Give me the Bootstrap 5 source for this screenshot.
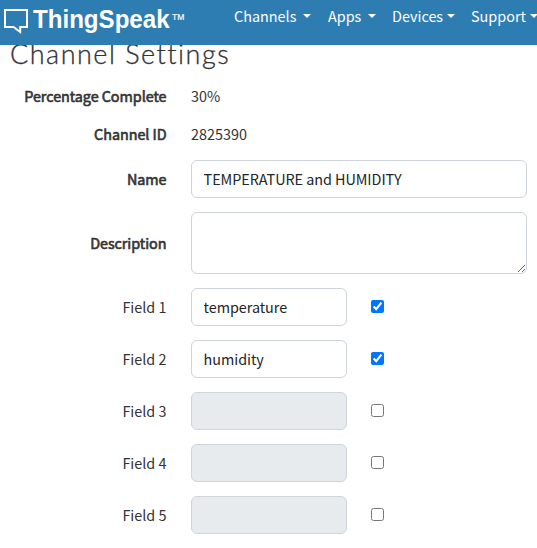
<!DOCTYPE html>
<html lang="en">
<head>
<meta charset="utf-8">
<meta name="viewport" content="width=device-width, initial-scale=1">
<title>Channel Settings - ThingSpeak</title>
<link href="https://cdn.jsdelivr.net/npm/bootstrap@5.3.0/dist/css/bootstrap.min.css" rel="stylesheet">
<style>
body{font-family:"Noto Sans CJK SC",sans-serif;font-size:14.4px;line-height:24px;color:#333;overflow:hidden}
.topbar{height:45px;background:#2e7db2;padding-left:3px}
.brand-text{font:bold 25.5px/36px "Liberation Sans",sans-serif;margin:1px -8px 0 5px;transform:scaleX(.945);transform-origin:left}
.brand-tm{font:9.5px/12px "Liberation Sans",sans-serif;margin:11px 0 0 2px;transform:scaleX(.9);transform-origin:left;-webkit-text-stroke:.2px #fff}
.main-menu{padding-top:4px;margin-right:-14px}
.main-menu .nav-link{padding:0;line-height:24px;color:#fff}
.item-channels{width:94px}.item-apps{width:64px}.item-devices{width:79px}.item-support{width:80px}
.item-channels .dropdown-toggle::after,.item-apps .dropdown-toggle::after{margin-left:7px}
.item-devices .dropdown-toggle::after,.item-support .dropdown-toggle::after{margin-left:4px}
.page-title{font:300 27px/32px Lato,sans-serif;letter-spacing:1.5px;height:33px;margin:-7px 0 0 10px;color:#333;-webkit-text-stroke:.3px #333}
.settings{padding:6px 10px 0 0}
.field-label{width:166.5px;text-align:right;margin-right:24.5px;flex:none}
.field-strong{-webkit-text-stroke:.6px #333;letter-spacing:-.06px}
.settings .form-control{font-size:14.4px;line-height:24px;height:38px;padding:5px 12px 7px 11.6px;border-color:#ced4da;border-radius:6px;color:#212529;letter-spacing:-.05px}
.settings .form-control:disabled{background:#e7ebee}
.settings textarea.form-control{height:62px;min-height:62px}
.settings .field-input{width:156px}
.text-row{height:38px}
.form-row{margin-bottom:14px}
.name-row{margin-top:7px}
.field-check{width:13px;height:13px;margin:0 0 2px 24px}
</style>
<script src="https://cdn.jsdelivr.net/npm/bootstrap@5.3.0/dist/js/bootstrap.bundle.min.js"></script>
</head>
<body>
<nav class="topbar d-flex align-items-start position-relative overflow-hidden">
  <a class="d-flex text-white text-decoration-none flex-shrink-0 brand-link" href="#">
    <svg width="25" height="36" viewBox="0 0 25 36" fill="none" stroke="#fff" stroke-width="2"><path d="M2 10H24V27H17.2V32L10.5 27H2Z"/></svg>
    <span class="brand-text">ThingSpeak</span><span class="brand-tm">TM</span>
  </a>
  <ul class="main-menu nav flex-nowrap ms-auto flex-shrink-0">
    <li class="item-channels"><a class="nav-link dropdown-toggle" href="#">Channels</a></li>
    <li class="item-apps"><a class="nav-link dropdown-toggle" href="#">Apps</a></li>
    <li class="item-devices"><a class="nav-link dropdown-toggle" href="#">Devices</a></li>
    <li class="item-support"><a class="nav-link dropdown-toggle" href="#">Support</a></li>
  </ul>
</nav>
<main>
  <h1 class="page-title">Channel Settings</h1>
  <form class="settings">
    <div class="d-flex align-items-center text-row"><span class="field-label field-strong">Percentage Complete</span><span>30%</span></div>
    <div class="d-flex align-items-center text-row"><span class="field-label field-strong">Channel ID</span><span>2825390</span></div>
    <div class="d-flex align-items-center form-row name-row"><label class="field-label field-strong" for="name">Name</label><input class="form-control" id="name" value="TEMPERATURE and HUMIDITY"></div>
    <div class="d-flex align-items-center form-row"><label class="field-label field-strong" for="desc">Description</label><textarea class="form-control" id="desc"></textarea></div>
    <div class="d-flex align-items-center form-row"><label class="field-label" for="f1">Field 1</label><input class="form-control field-input" id="f1" value="temperature"><input class="field-check" type="checkbox" checked></div>
    <div class="d-flex align-items-center form-row"><label class="field-label" for="f2">Field 2</label><input class="form-control field-input" id="f2" value="humidity"><input class="field-check" type="checkbox" checked></div>
    <div class="d-flex align-items-center form-row"><label class="field-label" for="f3">Field 3</label><input class="form-control field-input" id="f3" disabled><input class="field-check" type="checkbox"></div>
    <div class="d-flex align-items-center form-row"><label class="field-label" for="f4">Field 4</label><input class="form-control field-input" id="f4" disabled><input class="field-check" type="checkbox"></div>
    <div class="d-flex align-items-center form-row"><label class="field-label" for="f5">Field 5</label><input class="form-control field-input" id="f5" disabled><input class="field-check" type="checkbox"></div>
  </form>
</main>
</body>
</html>
